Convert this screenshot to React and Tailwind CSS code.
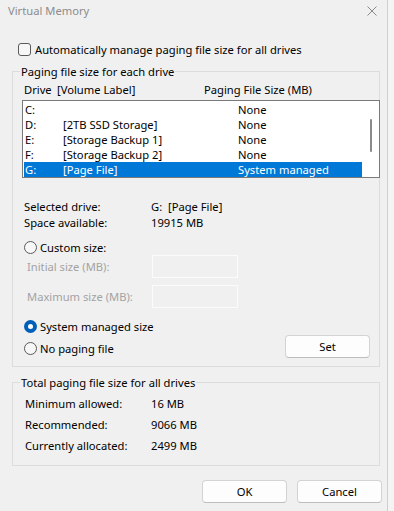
import React from "react";

const drives = [
  { d: "C:", label: "", size: "None" },
  { d: "D:", label: "[2TB SSD Storage]", size: "None" },
  { d: "E:", label: "[Storage Backup 1]", size: "None" },
  { d: "F:", label: "[Storage Backup 2]", size: "None" },
  { d: "G:", label: "[Page File]", size: "System managed", selected: true },
];

const Radio = ({ checked, children, className = "" }) => (
  <label className={`flex items-center h-[16px] gap-[3px] ${className}`}>
    {checked ? (
      <span className="w-[13px] h-[13px] rounded-full bg-[#005fb8] flex items-center justify-center">
        <span className="w-[5px] h-[5px] rounded-full bg-white" />
      </span>
    ) : (
      <span className="w-[13px] h-[13px] rounded-full border border-[#5a5a5a] bg-[#f7f7f7]" />
    )}
    <span>{children}</span>
  </label>
);

const Button = ({ children, className = "" }) => (
  <button className={`h-[23px] w-[85px] rounded-[4px] border border-[#d3d3d3] border-b-[#bdbdbd] bg-[#fdfdfd] text-black ${className}`}>
    {children}
  </button>
);

export default function App() {
  return (
    <div
      className="w-[394px] h-[511px] flex bg-[#f0f0f0] text-[11.2px] leading-[15px] text-black"
      style={{ fontFamily: '"Segoe UI", "Noto Sans", sans-serif' }}
    >
      <div className="w-[388px] border-r border-[#cfcfcf] flex flex-col">
        {/* title bar */}
        <div className="h-[20px] flex items-center justify-between pl-[8px] pr-[10px]">
          <span className="text-[#8c8c8c]">Virtual Memory</span>
          <svg width="10" height="10" viewBox="0 0 10 10" className="mt-[1px]">
            <path d="M0.5 0.5 L9.5 9.5 M9.5 0.5 L0.5 9.5" stroke="#8a8a8a" strokeWidth="1" fill="none" />
          </svg>
        </div>

        {/* auto manage */}
        <label className="mt-[22px] ml-[18px] h-[15px] flex items-center gap-[4px]">
          <span className="w-[13px] h-[13px] rounded-[3px] border border-[#5a5a5a] bg-[#f7f7f7]" />
          <span>Automatically manage paging file size for all drives</span>
        </label>

        {/* paging file size for each drive */}
        <fieldset className="mt-[7px] ml-[12px] w-[368px] border border-[#dcdcdc] pb-[8px] min-w-0">
          <legend className="ml-[7px] px-[1px] h-[15px]">Paging file size for each drive</legend>

          <div className="mt-[2px] h-[16px] flex items-center pl-[11px]">
            <span className="w-[33px]">Drive</span>
            <span className="w-[147px]">[Volume Label]</span>
            <span>Paging File Size (MB)</span>
          </div>

          <div className="mt-[3px] ml-[9px] w-[358px] h-[78px] border border-[#7a7a7a] bg-white flex">
            <div className="flex-1 pt-[1px] pl-[1px]">
              {drives.map((r) => (
                <div
                  key={r.d}
                  className={`h-[15px] flex items-center pl-[1px] ${r.selected ? "bg-[#0078d7] text-white" : ""}`}
                >
                  <span className="w-[38px]">{r.d}</span>
                  <span className="w-[175px]">{r.label}</span>
                  <span>{r.size}</span>
                </div>
              ))}
            </div>
            <div className="w-[17px] flex justify-center pt-[18px]">
              <div className="w-[2px] h-[33px] bg-[#8a8a8a] rounded-full" />
            </div>
          </div>

          <div className="mt-[20px] pl-[11px]">
            <div className="h-[16px] flex items-center">
              <span className="w-[127px]">Selected drive:</span>
              <span>G:&nbsp; [Page File]</span>
            </div>
            <div className="h-[16px] flex items-center">
              <span className="w-[127px]">Space available:</span>
              <span>19915 MB</span>
            </div>
          </div>

          <Radio className="mt-[9px] ml-[11px]">Custom size:</Radio>

          <div className="h-[23px] flex items-center pl-[14px] text-[#a3a3a3]">
            <span className="w-[125px]">Initial size (MB):</span>
            <span className="w-[86px] h-[23px] border border-[#fbfbfb]" />
          </div>
          <div className="mt-[7px] h-[23px] flex items-center pl-[14px] text-[#a3a3a3]">
            <span className="w-[125px]">Maximum size (MB):</span>
            <span className="w-[86px] h-[23px] border border-[#fbfbfb]" />
          </div>

          <Radio checked className="mt-[10px] ml-[11px]">System managed size</Radio>

          <div className="mt-[1px] h-[23px] flex items-start justify-between pl-[11px] pr-[9px]">
            <Radio className="mt-[5px]">No paging file</Radio>
            <Button>Set</Button>
          </div>
        </fieldset>

        {/* totals */}
        <fieldset className="mt-[8px] ml-[12px] w-[368px] border border-[#dcdcdc] pb-[9px] min-w-0">
          <legend className="ml-[7px] px-[1px] h-[15px]">Total paging file size for all drives</legend>
          <div className="mt-[3px] pl-[12px]">
            {[
              ["Minimum allowed:", "16 MB"],
              ["Recommended:", "9066 MB"],
              ["Currently allocated:", "2499 MB"],
            ].map(([k, v]) => (
              <div key={k} className="h-[21px] flex items-center">
                <span className="w-[126px]">{k}</span>
                <span>{v}</span>
              </div>
            ))}
          </div>
        </fieldset>

        <div className="mt-[14px] flex justify-end gap-[10px] pr-[5px]">
          <Button>OK</Button>
          <Button>Cancel</Button>
        </div>
      </div>
      <div className="flex-1 bg-[#f4f4f4]" />
    </div>
  );
}
